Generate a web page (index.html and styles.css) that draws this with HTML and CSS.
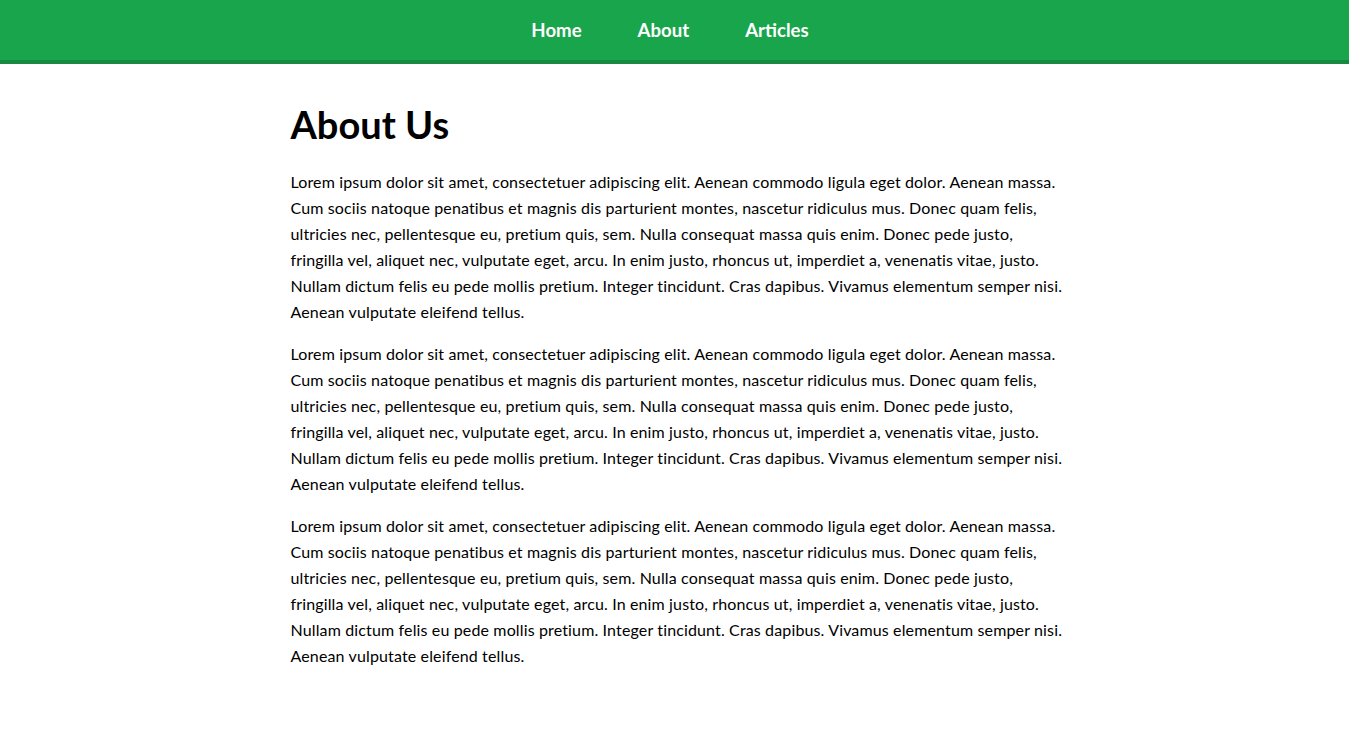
FILE: index.html
```html
<!DOCTYPE html>
<html lang="en">
<head>
<meta charset="utf-8">
<title>About Us</title>
<link rel="stylesheet" href="styles.css">
</head>
<body>
<header class="topbar">
  <nav class="nav">
    <a class="nav-link" href="#">Home</a>
    <a class="nav-link" href="#">About</a>
    <a class="nav-link" href="#">Articles</a>
  </nav>
</header>
<main class="content">
  <h1 class="title">About Us</h1>
  <p class="text">Lorem ipsum dolor sit amet, consectetuer adipiscing elit. Aenean commodo ligula eget dolor. Aenean massa. Cum sociis natoque penatibus et magnis dis parturient montes, nascetur ridiculus mus. Donec quam felis, ultricies nec, pellentesque eu, pretium quis, sem. Nulla consequat massa quis enim. Donec pede justo, fringilla vel, aliquet nec, vulputate eget, arcu. In enim justo, rhoncus ut, imperdiet a, venenatis vitae, justo. Nullam dictum felis eu pede mollis pretium. Integer tincidunt. Cras dapibus. Vivamus elementum semper nisi. Aenean vulputate eleifend tellus.</p>
  <p class="text">Lorem ipsum dolor sit amet, consectetuer adipiscing elit. Aenean commodo ligula eget dolor. Aenean massa. Cum sociis natoque penatibus et magnis dis parturient montes, nascetur ridiculus mus. Donec quam felis, ultricies nec, pellentesque eu, pretium quis, sem. Nulla consequat massa quis enim. Donec pede justo, fringilla vel, aliquet nec, vulputate eget, arcu. In enim justo, rhoncus ut, imperdiet a, venenatis vitae, justo. Nullam dictum felis eu pede mollis pretium. Integer tincidunt. Cras dapibus. Vivamus elementum semper nisi. Aenean vulputate eleifend tellus.</p>
  <p class="text">Lorem ipsum dolor sit amet, consectetuer adipiscing elit. Aenean commodo ligula eget dolor. Aenean massa. Cum sociis natoque penatibus et magnis dis parturient montes, nascetur ridiculus mus. Donec quam felis, ultricies nec, pellentesque eu, pretium quis, sem. Nulla consequat massa quis enim. Donec pede justo, fringilla vel, aliquet nec, vulputate eget, arcu. In enim justo, rhoncus ut, imperdiet a, venenatis vitae, justo. Nullam dictum felis eu pede mollis pretium. Integer tincidunt. Cras dapibus. Vivamus elementum semper nisi. Aenean vulputate eleifend tellus.</p>
</main>
</body>
</html>
```

FILE: styles.css
```css
* { box-sizing: border-box; }
html, body {
  margin: 0;
  padding: 0;
  background: #ffffff;
}
body {
  font-family: Lato, "Open Sans", sans-serif;
  color: #000000;
}
.topbar {
  background: #19a54c;
  border-bottom: 4px solid #178a40;
  height: 64px;
}
.nav {
  display: flex;
  justify-content: center;
  align-items: center;
  height: 60px;
  gap: 56px;
  padding-right: 9px;
}
.nav-link {
  color: #ffffff;
  text-decoration: none;
  font-weight: 700;
  font-size: 18.6px;
}
.content {
  max-width: 768px;
  margin: 0 auto;
  padding-top: 38px;
}
.title {
  font-size: 38px;
  font-weight: 700;
  margin: 0 0 23px;
  line-height: 44px;
}
.text {
  font-size: 16px;
  line-height: 26px;
  letter-spacing: 0.14px;
  margin: 0 -8px 16px 0;
}
```
